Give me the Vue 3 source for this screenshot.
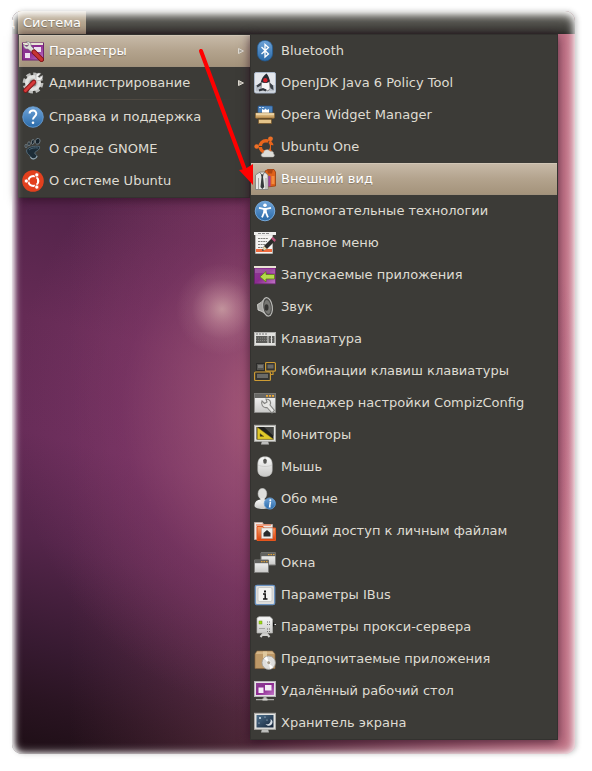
<script setup>
const systemItems = [
  { icon: 'prefs', label: 'Параметры', submenu: true, active: true },
  { icon: 'admin', label: 'Администрирование', submenu: true },
  { separator: true },
  { icon: 'help', label: 'Справка и поддержка' },
  { icon: 'gnome', label: 'О среде GNOME' },
  { icon: 'ubuntu', label: 'О системе Ubuntu' },
]

const prefItems = [
  { icon: 'bluetooth', label: 'Bluetooth' },
  { icon: 'java', label: 'OpenJDK Java 6 Policy Tool' },
  { icon: 'opera', label: 'Opera Widget Manager' },
  { icon: 'ubuntuone', label: 'Ubuntu One' },
  { icon: 'appearance', label: 'Внешний вид', active: true },
  { icon: 'access', label: 'Вспомогательные технологии' },
  { icon: 'mainmenu', label: 'Главное меню' },
  { icon: 'startup', label: 'Запускаемые приложения' },
  { icon: 'sound', label: 'Звук' },
  { icon: 'keyboard', label: 'Клавиатура' },
  { icon: 'shortcuts', label: 'Комбинации клавиш клавиатуры' },
  { icon: 'compiz', label: 'Менеджер настройки CompizConfig' },
  { icon: 'monitors', label: 'Мониторы' },
  { icon: 'mouse', label: 'Мышь' },
  { icon: 'about', label: 'Обо мне' },
  { icon: 'sharing', label: 'Общий доступ к личным файлам' },
  { icon: 'windows', label: 'Окна' },
  { icon: 'ibus', label: 'Параметры IBus' },
  { icon: 'proxy', label: 'Параметры прокси-сервера' },
  { icon: 'package', label: 'Предпочитаемые приложения' },
  { icon: 'remote', label: 'Удалённый рабочий стол' },
  { icon: 'saver', label: 'Хранитель экрана' },
]
</script>

<template>
  <main class="desktop">
    <svg class="sprite" aria-hidden="true">
      <defs>
        <linearGradient id="gBlue" x1="0" y1="0" x2="0" y2="1">
          <stop offset="0" stop-color="#6fa3d8" /><stop offset="1" stop-color="#2a6aa8" />
        </linearGradient>
        <linearGradient id="gPurple" x1="0" y1="0" x2="1" y2="1">
          <stop offset="0" stop-color="#8a3f92" /><stop offset=".5" stop-color="#8c2a90" /><stop offset="1" stop-color="#c277c8" />
        </linearGradient>
        <linearGradient id="gLight" x1="0" y1="0" x2="0" y2="1">
          <stop offset="0" stop-color="#fafafa" /><stop offset="1" stop-color="#c8c8c6" />
        </linearGradient>
        <linearGradient id="gOrange" x1="0" y1="0" x2="0" y2="1">
          <stop offset="0" stop-color="#f7a26c" /><stop offset="1" stop-color="#d9430e" />
        </linearGradient>
        <linearGradient id="gTan" x1="0" y1="0" x2="0" y2="1">
          <stop offset="0" stop-color="#f0d6a2" /><stop offset="1" stop-color="#b98b4c" />
        </linearGradient>
        <linearGradient id="gNight" x1="0" y1="0" x2="1" y2="1">
          <stop offset="0" stop-color="#4d708c" /><stop offset="1" stop-color="#142338" />
        </linearGradient>
      </defs>

      <symbol id="i-prefs" viewBox="0 0 22 22">
        <rect x=".5" y="3" width="21" height="17" fill="url(#gPurple)" stroke="#6c2470" />
        <path d="M1 3h20v2H1z" fill="#e9e5d6" />
        <path d="M3 13h5v5H3zM12 7h7v5h-7z" fill="#eedff0" />
        <path d="M4 1.500l2.500 2.500-.5 2-2 .5L1.500 4C1 7 3 9.500 6 9l6 5 2.500-2.500L9 6C9.500 3 7 1 4 1.500z" fill="#dededb" stroke="#777" stroke-width=".6" />
        <path d="M12 12l7.500 7.500" stroke="#7c1212" stroke-width="5" stroke-linecap="round" />
        <path d="M12 12l7.500 7.500" stroke="#c83434" stroke-width="3.200" stroke-linecap="round" />
      </symbol>
      <symbol id="i-admin" viewBox="0 0 22 22">
        <circle cx="11" cy="11" r="8.600" fill="none" stroke="#bdbdbb" stroke-width="3.600" stroke-dasharray="4.150 2.600" />
        <circle cx="11" cy="11" r="6.500" fill="#d2d2d0" stroke="#e2e2e0" stroke-width="3" />
        <circle cx="11" cy="11" r="3.500" fill="#83837f" />
        <path d="M10 13l6-7" stroke="#f5f5f3" stroke-width="3" />
        <path d="M14 2.500c2-2 4-1.500 5-1l-3 3 1.500 1.500 3-3c1 3-1 6-4 5.500L14 9z" fill="#f2f2f0" stroke="#777" stroke-width=".4" />
        <path d="M3.500 18.500L12 10" stroke="#7f1515" stroke-width="4.600" stroke-linecap="round" />
        <path d="M3.500 18.500L12 10" stroke="#d63a3a" stroke-width="3" stroke-linecap="round" />
      </symbol>
      <symbol id="i-help" viewBox="0 0 22 22">
        <circle cx="11" cy="11" r="10.300" fill="url(#gBlue)" stroke="#6ba0d5" stroke-width=".8" />
        <path d="M7.500 7.500C8 3.500 14.500 3.700 14.300 7.800 14.200 10.400 11 10.500 11 13.500" fill="none" stroke="#fff" stroke-width="2" />
        <circle cx="11" cy="16.800" r="1.300" fill="#fff" />
      </symbol>
      <symbol id="i-gnome" viewBox="0 0 22 22">
        <path d="M17.500 8.500C13 7.500 4.500 9 4.500 13c0 3.500 4.500 4 4 6.500 1 2.500 6 2 6.500-1 .3-2-2.500-1.800-2.300-3.500.2-2 5.800-2.500 4.800-6.500z" fill="#1d2d38" stroke="#5b7484" stroke-width=".8" />
        <path d="M7 12c2-2 6-2.500 9-2" fill="none" stroke="#4a6475" stroke-width="1" />
        <path d="M8.500 19c1.500 3 6 2 6.500-.8" fill="none" stroke="#93a4ad" stroke-width="1.200" />
        <ellipse cx="15.700" cy="3.300" rx="2.300" ry="3" fill="#16222b" stroke="#84949c" stroke-width=".7" transform="rotate(18 15.700 3.300)" />
        <ellipse cx="10.800" cy="4" rx="1.400" ry="2.500" fill="#16222b" stroke="#8c9aa1" stroke-width=".7" transform="rotate(12 10.800 4)" />
        <ellipse cx="7" cy="5.800" rx="1.200" ry="2.100" fill="#16222b" stroke="#8c9aa1" stroke-width=".7" />
        <ellipse cx="4" cy="8" rx="1" ry="1.700" fill="#16222b" stroke="#8c9aa1" stroke-width=".7" />
      </symbol>
      <symbol id="i-ubuntu" viewBox="0 0 22 22">
        <circle cx="11" cy="11" r="10.800" fill="#e2401e" />
        <circle cx="11.300" cy="11" r="4.900" fill="none" stroke="#fff" stroke-width="2.300" />
        <path d="M11.300 11L3 11M11.300 11l4.200-7.300M11.300 11l4.200 7.300" stroke="#e2401e" stroke-width="1.200" />
        <g fill="#fff" stroke="#e2401e" stroke-width=".8"><circle cx="4.300" cy="11" r="2.100" /><circle cx="14.800" cy="4.900" r="2.100" /><circle cx="14.800" cy="17.100" r="2.100" /></g>
        <circle cx="11.300" cy="11" r="3.500" fill="#e2401e" />
      </symbol>
      <symbol id="i-bluetooth" viewBox="0 0 22 22">
        <rect x="3.400" y=".4" width="15.200" height="20.600" rx="7.400" fill="url(#gBlue)" stroke="#1f5a94" stroke-width=".7" />
        <path d="M7.500 7l7 7-3.500 3V4.500l3.500 3-7 6.500" fill="none" stroke="#fff" stroke-width="1.300" />
      </symbol>
      <symbol id="i-java" viewBox="0 0 22 22">
        <rect x=".5" y=".5" width="21" height="20.500" rx="1.500" fill="#e4e7ec" stroke="#a9b6c8" />
        <path d="M1.500 13h19v6.500h-19z" fill="#b9c0ca" />
        <path d="M7.500 10l-5 3.500 1 2 5-3zM14.500 9.500l4.500 4 .5 4.500-2-1-3-4z" fill="#3a4048" />
        <path d="M7.500 9l8-1 .5 8.500-2 2.500-3-1.500L7 18.500z" fill="#f6f6f6" stroke="#555" stroke-width=".6" />
        <path d="M12.500 1.500C9.500 3.500 7.500 6.500 7 9.800c2.800 1.800 6 1.500 8.800-.4-.3-3-1.300-5.600-3.300-7.900z" fill="#252a32" />
        <circle cx="11.300" cy="8.300" r="2.200" fill="#d4202a" />
        <path d="M5 18.500l4-1.500 3 1.500" fill="none" stroke="#30353c" stroke-width="2" />
      </symbol>
      <symbol id="i-opera" viewBox="0 0 22 22">
        <rect x="4" y="2" width="14.500" height="9" rx="1" fill="#4b82bd" stroke="#28588f" stroke-width=".7" />
        <path d="M5 3.500h2M8 3.500h2" stroke="#c5daf0" />
        <path d="M8 9V5l2 1 1.500-1.500L13 6l2-1v4z" fill="#fff" />
        <rect x="1.500" y="9" width="19" height="5.300" rx=".8" fill="url(#gTan)" stroke="#8c6733" stroke-width=".7" />
        <path d="M2 10h18" stroke="#fae7bf" />
        <path d="M4.500 15h13v4.500h-13z" fill="#e4c48a" stroke="#765428" stroke-width=".7" />
        <path d="M4 15h14" stroke="#5b4220" />
      </symbol>
      <symbol id="i-ubuntuone" viewBox="0 0 22 22">
        <circle cx="12" cy="10.500" r="5.800" fill="none" stroke="#e8641b" stroke-width="3.600" />
        <path d="M12 10.500H3.500M12 10.500l4.500-8" stroke="#3c3b37" stroke-width="1" />
        <path d="M17 9l4 .5v5h-4z" fill="#3c3b37" />
        <circle cx="2.700" cy="10.500" r="2.300" fill="#ed6f27" /><circle cx="16.500" cy="2.800" r="2.400" fill="#ed6f27" />
        <path d="M9.500 21c-3 0-3-4 0-4 0-3.500 5-4.500 6.500-1.700 2.500-.5 4 1 3.500 2.700 1.500.7 1 3-1 3z" fill="#deded9" stroke="#aaa9a4" stroke-width=".5" />
      </symbol>
      <symbol id="i-appearance" viewBox="0 0 22 22">
        <path d="M11 3l3-1.500h6L21.500 4v14l-9 1z" fill="#e0621b" stroke="#8f3305" stroke-width=".7" />
        <path d="M13 1.500h6l-1 4h-4z" fill="#b04512" />
        <path d="M14 8h2.500v10.500H14z" fill="#a33f9c" />
        <path d="M17.500 8h3v8h-3z" fill="#f28b3d" />
        <path d="M1.500 7L6 4h4.500l3.500 3v14.500H1.500z" fill="#e6e6e4" stroke="#7c7b76" stroke-width=".8" />
        <path d="M4.500 10v11M12 10v11" stroke="#a4a4a1" />
        <path d="M5.500 4l2.700 3.500L11 4" fill="none" stroke="#777" />
        <path d="M7 6.500h2.500L9 9l1.200 10-1.900 2-1.800-2L7.500 9z" fill="#363a3c" />
      </symbol>
      <symbol id="i-access" viewBox="0 0 22 22">
        <circle cx="11" cy="11" r="9.800" fill="url(#gBlue)" stroke="#74a8da" />
        <circle cx="11" cy="5.300" r="1.800" fill="#fff" />
        <path d="M5 7.800l4.500 1h3l4.500-1M11 8.500V12M10.500 11.500L8 17.300M11.500 11.500l2.500 5.800" fill="none" stroke="#fff" stroke-width="1.800" />
        <path d="M9.300 8.500h3.400V13H9.300z" fill="#fff" />
      </symbol>
      <symbol id="i-mainmenu" viewBox="0 0 22 22">
        <path d="M1.500 3h17v18.500h-17z" fill="#f4f3f1" stroke="#c7c6c2" stroke-width=".6" />
        <path d="M0 0h22v3H0z" fill="#eeeeec" /><path d="M4 1.500h11" stroke="#888" stroke-dasharray="3 1" />
        <path d="M4 6.500h10M4 9.500h9M4 12.500h8M4 15.500h5" stroke="#81807c" stroke-dasharray="2 .6" />
        <path d="M2 17h16v3H2z" fill="#ee6a3d" />
        <path d="M8 19l2-5 8.500-8.500 3 3L13 17z" fill="#2c2c2b" />
        <path d="M17 6.500l3.500 3.500 1.500-2-3-3z" fill="#bb527a" />
        <path d="M8 19l2-5 3 3z" fill="#ead9a8" /><path d="M8 19l.8-2 1.200 1.200z" fill="#222" />
      </symbol>
      <symbol id="i-startup" viewBox="0 0 22 22">
        <rect x=".4" y="2.400" width="21.200" height="17.500" fill="url(#gPurple)" stroke="#642568" stroke-width=".8" />
        <path d="M0 2h22v2H0z" fill="#e8e4d4" />
        <path d="M1 5h20v4H1z" fill="#fff" opacity=".15" />
        <path d="M6 12.800L12 7.500v3h8.500v4.500H12v3z" fill="#b4da4a" stroke="#587c14" stroke-width=".8" />
      </symbol>
      <symbol id="i-sound" viewBox="0 0 22 22">
        <path d="M3.500 8.500L7 6.500l4-4 2 17-5-4-4-1.500z" fill="#a6a6a2" stroke="#dededb" stroke-width=".8" />
        <ellipse cx="13.500" cy="10.800" rx="4.800" ry="9.300" fill="#4c4c49" stroke="#b9b9b6" stroke-width="1.200" transform="rotate(-8 13.500 10.800)" />
        <ellipse cx="13.500" cy="11" rx="3.200" ry="7" fill="#777773" transform="rotate(-8 13.500 11)" />
        <ellipse cx="12.500" cy="11.500" rx="2" ry="3.300" fill="#343432" />
      </symbol>
      <symbol id="i-keyboard" viewBox="0 0 22 22">
        <rect x=".5" y="4.500" width="21" height="13" fill="#e2e2df" stroke="#b0b0ad" />
        <path d="M2 8h11.500v7H2zM14.500 8H17v7h-2.500zM18 8h2.500v7H18z" fill="#5c5c59" />
        <path d="M2 10h11.500M2 12.500h11.500M14 10.500h7M14 13h7" stroke="#92928f" stroke-width=".7" stroke-dasharray="1 1" />
        <path d="M2 6h11" stroke="#777" stroke-dasharray="2 1" />
      </symbol>
      <symbol id="i-shortcuts" viewBox="0 0 22 22">
        <path d="M19 11v3.500h-3" fill="none" stroke="#c9962c" stroke-width="1.200" />
        <rect x="2.500" y="3.500" width="8" height="7" fill="#555552" stroke="#2b2b29" /><path d="M4 5h5v3H4z" fill="#777774" />
        <rect x="11.600" y="2.500" width="9.800" height="8.700" rx="1" fill="#343432" stroke="#cd9c34" stroke-width="1.200" /><path d="M13.500 4.500h6v4h-6z" fill="#6a6a67" />
        <rect x=".6" y="12" width="15.800" height="8.500" rx="1" fill="#343432" stroke="#cd9c34" stroke-width="1.200" /><path d="M3 14h11v4H3z" fill="#6a6a67" />
      </symbol>
      <symbol id="i-compiz" viewBox="0 0 22 22">
        <path d="M.5 1.500h21v19H.5z" fill="url(#gLight)" stroke="#8b8b88" />
        <path d="M.5 1.500h21V6H.5z" fill="#686865" />
        <path d="M12 3.800h8" stroke="#efaa36" stroke-width="1.800" stroke-dasharray="2 1" />
        <path d="M8 9l2.500 2.500L13 10l-1-3c4 0 5.500 3 4 6l4.500 5.500-2.500 2.500-5-5.500C9 16.500 6.500 12 8 9z" fill="#e6e6e3" stroke="#858582" stroke-width="1.100" />
      </symbol>
      <symbol id="i-monitors" viewBox="0 0 22 22">
        <path d="M8 17h6l1 3.500H7z" fill="#bdbdbb" />
        <rect x=".5" y="1.300" width="21" height="16" fill="#e4e4e1" stroke="#a9a9a6" />
        <path d="M2.500 3h17v12.500h-17z" fill="#1f201f" />
        <path d="M10 3h9.500v9z" fill="#454643" />
        <path d="M3.300 3.300v12h16.200zM6 9.500l4 3H6z" fill="#e0c92a" fill-rule="evenodd" stroke="#8c7915" stroke-width=".5" />
      </symbol>
      <symbol id="i-mouse" viewBox="0 0 22 22">
        <path d="M3.800 8C4 2.500 7 .8 11 .8s7 1.700 7.200 7.200v6c0 4.500-3 6.500-7.200 6.500s-7.200-2-7.200-6.500z" fill="url(#gLight)" stroke="#c0c0bd" stroke-width=".6" />
        <path d="M4 9c4 2 10 2 14 0M11 1v3" fill="none" stroke="#c6c6c3" stroke-width=".7" />
        <rect x="9.300" y="2.700" width="3.400" height="5" rx="1.600" fill="#555552" />
      </symbol>
      <symbol id="i-about" viewBox="0 0 22 22">
        <path d="M.5 18c0-5 3-6 6-6.500h4c4 .5 6 2.500 6 6.500-.5 4-15.500 4-16 0z" fill="url(#gLight)" />
        <ellipse cx="8.400" cy="5.800" rx="4.400" ry="5.600" fill="#dededb" stroke="#bdbdba" stroke-width=".5" />
        <path d="M6.500 10h4v3l-2 2-2-2z" fill="#e9e9e6" />
        <circle cx="15.800" cy="15.500" r="5.600" fill="url(#gBlue)" stroke="#68a0d6" stroke-width=".8" />
        <path d="M15.500 14.500h.8l-.7 4.300h1" fill="none" stroke="#fff" stroke-width="1.500" /><circle cx="16.300" cy="12.300" r="1" fill="#fff" />
      </symbol>
      <symbol id="i-sharing" viewBox="0 0 22 22">
        <path d="M.5 2.500h8l1 2h9v15H.5z" fill="#eee8e5" stroke="#bcaaa2" />
        <path d="M2 5h15" stroke="#f07b4d" stroke-width="1.200" />
        <path d="M3 20.500v-14h6l1 1.500h11.500v12.500z" fill="url(#gOrange)" stroke="#e5551d" />
        <path d="M7.500 8h11v10.500h-11z" fill="#efefec" stroke="#aaa29e" stroke-width=".5" />
        <path d="M13 10l3.500 3v3.500h-7V13z" fill="#292b2c" />
      </symbol>
      <symbol id="i-windows" viewBox="0 0 22 22">
        <path d="M7 .8h14.500V13H7z" fill="url(#gLight)" stroke="#7b7b78" /><path d="M7 .8h14.500v3.400H7z" fill="#62625f" /><path d="M14 2.600h6.500" stroke="#efaa36" stroke-dasharray="1.500 1" />
        <path d="M.5 8h14v12.500H.5z" fill="url(#gLight)" stroke="#7b7b78" /><path d="M.5 8h14v3.200H.5z" fill="#62625f" /><path d="M7 9.700h6.500" stroke="#efaa36" stroke-dasharray="1.500 1" />
      </symbol>
      <symbol id="i-ibus" viewBox="0 0 22 22">
        <rect x="1.300" y="1.300" width="19.400" height="19.400" rx="1.800" fill="#dcdcda" stroke="#6b93c2" stroke-width="1.300" />
        <rect x="4" y="3.500" width="14" height="14" rx="1.500" fill="#f3f3f1" stroke="#bdbdba" stroke-width=".7" />
        <path d="M9 10h2.200v5M9 15h4.500" fill="none" stroke="#161616" stroke-width="1.500" /><path d="M10 6.500h2V8.500h-2z" fill="#161616" />
      </symbol>
      <symbol id="i-proxy" viewBox="0 0 22 22">
        <path d="M6.500 21l4.500-5.500 4.500 5.500M10 15h2v4h-2z" fill="none" stroke="#d0d0cd" stroke-width="2" />
        <path d="M3 2l2-1.300h11L18.500 3v14H3z" fill="url(#gLight)" stroke="#b2b2af" stroke-width=".7" />
        <rect x="5" y="5" width="3" height="3" fill="#9fdc14" stroke="#6b8e15" stroke-width=".5" />
        <path d="M13 6h4M13 8.500h4M13 13h4M13 15.500h4" stroke="#6c6c69" stroke-dasharray="1 1" /><path d="M5 12.500h6" stroke="#a5a5a2" />
        <path d="M19 6l2 2.500-2 2.500z" fill="#111" /><path d="M20.500 8.500H22" stroke="#eee" />
      </symbol>
      <symbol id="i-package" viewBox="0 0 22 22">
        <path d="M1 6l2-3h15.500L21 6v14.500H1z" fill="#bd9867" stroke="#8a6941" stroke-width=".7" />
        <path d="M1.500 6l1.800-2.500h15L20.500 6z" fill="#d4b587" /><path d="M9 3.500h4V10H9z" fill="#e0c99e" />
        <circle cx="14.700" cy="14.700" r="6.700" fill="#dededc" stroke="#9e9e9b" stroke-width=".8" />
        <path d="M14.700 14.700L10 10.500l3-2.300zM14.700 14.700l4.500 4.500-3 1.800z" fill="#fff" />
        <circle cx="14.700" cy="14.700" r="2" fill="#a69b88" stroke="#f5f5f3" stroke-width=".9" />
      </symbol>
      <symbol id="i-remote" viewBox="0 0 22 22">
        <path d="M9.500 17h3v2h-3zM2 19h18v1.200H2z" fill="#aaaaa7" /><path d="M8.500 18.500h5v2h-5z" fill="#d0d0cd" />
        <rect x=".5" y="1.500" width="21" height="15" fill="#e5e2e5" stroke="#b6b3b6" />
        <path d="M2 3h18v12H2z" fill="url(#gPurple)" />
        <path d="M4.500 7.500h5v5.500h-5zM11 5h6.500v5.500H11z" fill="#f4edf5" />
      </symbol>
      <symbol id="i-saver" viewBox="0 0 22 22">
        <path d="M8 17h6l1 3.500H7z" fill="#bdbdbb" />
        <rect x=".5" y="1.300" width="21" height="16" fill="#e4e4e1" stroke="#a9a9a6" />
        <path d="M2.500 3h17v12.500h-17z" fill="url(#gNight)" />
        <path d="M16.500 7c1 4-2 6-5 5 2 3 7 2 7-2 0-1.500-1-2.500-2-3z" fill="#d8e0e8" />
        <g fill="#d9e8f3"><circle cx="6" cy="6" r="1" /><circle cx="11" cy="5" r=".6" /><circle cx="5" cy="11" r=".6" /><circle cx="13" cy="8" r=".5" /></g>
      </symbol>
    </svg>

    <div class="screen">
      <nav class="panel" aria-label="Панель">
        <button class="panel-item cut" type="button">д</button>
        <button class="panel-item open" type="button">Система</button>
      </nav>
      <div class="menus">
        <ul class="menu system">
          <li v-for="(item, i) in systemItems" :key="i">
            <hr v-if="item.separator" class="separator">
            <button v-else type="button" class="row" :class="{ active: item.active }">
              <svg class="icon" aria-hidden="true"><use :href="'#i-' + item.icon" /></svg>
              <span class="label">{{ item.label }}</span>
              <svg v-if="item.submenu" class="chevron" viewBox="0 0 6 6" aria-hidden="true">
                <path d="M.5.500L5.500 3 .5 5.500z" />
              </svg>
            </button>
          </li>
        </ul>
        <ul class="menu prefs">
          <li v-for="item in prefItems" :key="item.icon">
            <button type="button" class="row" :class="{ active: item.active }">
              <svg class="icon" aria-hidden="true"><use :href="'#i-' + item.icon" /></svg>
              <span class="label">{{ item.label }}</span>
            </button>
          </li>
        </ul>
        <svg class="pointer" viewBox="0 0 60 142" aria-hidden="true">
          <path d="M5 5L49 124" stroke="#f00" stroke-width="4" stroke-linecap="round" />
          <path d="M57 139L43 124l6-1 8-5z" fill="#f00" />
        </svg>
      </div>
    </div>
  </main>
</template>

<style>
body {
  margin: 0;
  background: #fff;
}
</style>

<style scoped>
.desktop {
  box-sizing: border-box;
  min-height: 100vh;
  padding: 11px 17px 17px 12px;
  display: flex;
  font: 13px/18px "DejaVu Sans", sans-serif;
  color: #dfdbd2;
}

.sprite {
  position: absolute;
  width: 0;
  height: 0;
}

.screen {
  position: relative;
  flex: 1;
  min-width: 0;
  display: flex;
  flex-direction: column;
  border-radius: 10px;
  box-shadow: 2px 0 5px rgba(60, 60, 60, 0.28);
  background:
    radial-gradient(circle at 210px 298px, rgba(222, 185, 180, 0.68) 0, rgba(215, 165, 172, 0.46) 14px, rgba(200, 145, 160, 0.16) 30px, rgba(190, 130, 150, 0) 46px),
    radial-gradient(ellipse 290px 310px at 290px 400px, rgba(196, 112, 134, 0.85), rgba(165, 88, 125, 0.6) 30%, rgba(140, 60, 115, 0.35) 62%, rgba(110, 45, 90, 0) 100%),
    linear-gradient(90deg, rgba(200, 110, 130, 0) 10%, rgba(190, 100, 120, 0.22) 42%, rgba(212, 128, 146, 0.9) 100%),
    linear-gradient(14deg, #1d0e15 0, #2a1422 7%, #371a31 13%, #54254a 25%, #672c58 37%, #652b55 50%, #55244b 63%, #4c2044 100%);
}

.screen::after {
  content: "";
  position: absolute;
  inset: 0;
  border-radius: 10px;
  box-shadow:
    inset 0 0 10px 1px rgba(255, 255, 255, 0.85),
    inset 3px 0 6px -2px rgba(255, 255, 255, 0.9),
    inset 0 4px 9px -2px rgba(255, 255, 255, 0.8);
  pointer-events: none;
}

.panel {
  display: flex;
  height: 23px;
  border-radius: 10px 10px 0 0;
  background: linear-gradient(#76756f, #3c3b37 85%, #2d2c29);
}

.panel-item {
  padding: 0 5px;
  border: 0;
  background: none;
  color: #dfdbd2;
  font: inherit;
}

.cut {
  display: flex;
  justify-content: flex-end;
  align-items: center;
  width: 6px;
  padding: 0 3px 0 0;
  overflow: hidden;
}

.open {
  background: linear-gradient(#c8bba8, #a4937b);
  color: #fff;
  text-shadow: 0 1px 1px rgba(0, 0, 0, 0.3);
}

.menus {
  position: relative;
  display: flex;
  align-items: flex-start;
  padding: 0 17px 0 6px;
}

.menu {
  box-sizing: border-box;
  margin: 0;
  padding: 1px;
  list-style: none;
  background: #3c3b37;
  box-shadow: inset 0 0 0 1px #33322f, 0 2px 10px rgba(40, 10, 30, 0.7);
}

.system {
  flex: 0 0 232px;
  padding-right: 0;
}

.prefs {
  flex: 1;
  min-width: 0;
}

.row {
  display: flex;
  align-items: center;
  gap: 5px;
  width: 100%;
  height: 32px;
  padding: 0 6px 0 3px;
  border: 0;
  background: none;
  color: inherit;
  font: inherit;
  text-align: left;
  white-space: nowrap;
}

.label {
  flex: 1;
}

.active {
  background: linear-gradient(#c8bba9, #b3a38d 50%, #a3927a);
  box-shadow: inset 0 1px #d1c6b6, inset 0 -1px #a0917c;
  color: #fff;
  text-shadow: 0 1px 1px rgba(0, 0, 0, 0.25);
}

.icon {
  flex: none;
  width: 22px;
  height: 22px;
}

.chevron {
  flex: none;
  width: 6px;
  height: 6px;
  fill: #aaa69e;
  stroke: #dfdbd2;
}

.separator {
  height: 1px;
  margin: 0 16px 1px;
  border: 0;
  background: linear-gradient(90deg, transparent, #504a42, transparent);
}

.pointer {
  position: absolute;
  left: 184px;
  top: 12px;
  width: 60px;
  height: 142px;
}
</style>
